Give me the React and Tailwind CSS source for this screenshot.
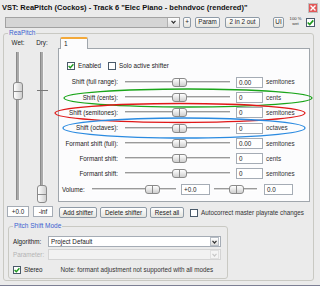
import React from 'react'

const rows = [
  { label: 'Shift (full range):', value: '0.00', unit: 'semitones' },
  { label: 'Shift (cents):', value: '0', unit: 'cents' },
  { label: 'Shift (semitones):', value: '0', unit: 'semitones' },
  { label: 'Shift (octaves):', value: '0', unit: 'octaves' },
  { label: 'Formant shift (full):', value: '0.00', unit: 'semitones' },
  { label: 'Formant shift:', value: '0', unit: 'cents' },
  { label: 'Formant shift:', value: '0', unit: 'semitones' },
]

function Check({ on }) {
  return (
    <div className="w-[8px] h-[8px] border border-[#4a5a6a] bg-white flex items-center justify-center shrink-0">
      {on && (
        <svg width="6" height="6" viewBox="0 0 6 6">
          <path d="M0.6 3 L2.3 4.7 L5.4 1.2" stroke="#1e9a1e" strokeWidth="1.4" fill="none" />
        </svg>
      )}
    </div>
  )
}

function Btn({ children, className = '' }) {
  return (
    <div className={`h-[11px] flex items-center justify-center rounded-[2px] border border-[#8e9aa6] bg-gradient-to-b from-white to-[#e4e4de] text-[6.3px] text-[#222] whitespace-nowrap ${className}`}>
      {children}
    </div>
  )
}

function HSlider({ w, pos }) {
  return (
    <div className="relative h-[9px] shrink-0" style={{ width: w }}>
      <div className="absolute left-0 right-0 top-[3px] h-[3px] bg-[#d6d6d6] border-t border-[#9a9a9a] border-b border-b-white" />
      <div
        className="absolute top-0 h-[9px] w-[15px] rounded-[3px] border border-[#8a8a8a] bg-gradient-to-b from-white to-[#cfcfcf] flex justify-center"
        style={{ left: pos - 7 }}
      >
        <div className="w-px h-full bg-[#8a8a8a]" />
      </div>
    </div>
  )
}

function VSlider({ label, thumb, tick }) {
  return (
    <div className="w-[12px] flex flex-col items-center">
      <div className="h-[8px] text-[6.3px] leading-[8px] whitespace-nowrap">{label}</div>
      <div className="relative w-[12px] h-[157px]">
        <div className="absolute left-[4px] top-[5px] w-[4px] h-[148px] bg-[#a9a9a9] border-l border-[#8a8a8a] border-r border-r-[#f4f4f4]" />
        {tick && <div className="absolute left-[1px] w-[11px] h-px bg-[#777]" style={{ top: tick }} />}
        <div
          className="absolute left-[1px] w-[10px] h-[18px] rounded-[3px] border border-[#8a8a8a] bg-gradient-to-r from-white to-[#cfcfcf] flex items-center"
          style={{ top: thumb }}
        >
          <div className="w-full h-px bg-[#8a8a8a]" />
        </div>
      </div>
    </div>
  )
}

function Edit({ children, className = '' }) {
  return (
    <div className={`h-[11px] bg-white border border-[#a5acb5] text-[6.3px] leading-[9px] px-[2px] shrink-0 ${className}`}>
      {children}
    </div>
  )
}

export default function App() {
  return (
    <div className="relative w-[320px] h-[286px] overflow-hidden bg-[#ebebeb] text-[#222] font-['Liberation_Sans',Arial,sans-serif] border-b border-[#7c7f94]">
      {/* title */}
      <div className="h-[15px] flex items-center pl-[2px] pr-[2px]">
        <span className="text-[7.5px] font-bold text-[#111] whitespace-nowrap">
          VST: ReaPitch (Cockos) - Track 6 "Elec Piano - behndvoc (rendered)"
        </span>
        <div className="ml-auto w-[10px] h-[10px] bg-[#e25858] border border-[#c0c0c0] flex items-center justify-center">
          <svg width="6" height="6" viewBox="0 0 6 6">
            <path d="M0.5 0.5 L5.5 5.5 M5.5 0.5 L0.5 5.5" stroke="white" strokeWidth="1.4" />
          </svg>
        </div>
      </div>

      {/* toolbar */}
      <div className="h-[14px] flex items-center pl-[5px]">
        <div className="w-[175px] h-[11px] bg-[#d5d5d5] border border-[#a2a2a2] flex justify-end">
          <div className="w-[12px] h-full bg-gradient-to-b from-white to-[#dcdcdc] border-l border-[#b0b0b0] flex items-center justify-center">
            <svg width="5" height="4" viewBox="0 0 5 4"><path d="M0.5 0.8 L2.5 3 L4.5 0.8" stroke="#333" strokeWidth="1.2" fill="none" /></svg>
          </div>
        </div>
        <Btn className="ml-[3px] w-[8px]">+</Btn>
        <Btn className="ml-[4px] w-[25px]">Param</Btn>
        <Btn className="ml-[5px] w-[35px]">2 in 2 out</Btn>
        <Btn className="ml-[13px] w-[11px]">UI</Btn>
        <div className="ml-[5px] w-[13px] flex flex-col items-center text-[4.2px] leading-[4.6px] text-[#333]">
          <span>100 %</span>
          <span>wet</span>
        </div>
        <div className="ml-[4px] w-[9px] h-[9px] border border-[#4a5a6a] bg-white flex items-center justify-center">
          <svg width="7" height="7" viewBox="0 0 6 6"><path d="M0.6 3 L2.3 4.7 L5.4 1.2" stroke="#1e9a1e" strokeWidth="1.4" fill="none" /></svg>
        </div>
      </div>

      {/* ReaPitch group */}
      <div className="relative mt-[4px] ml-[3px] w-[311px] h-[248px] border border-[#c9c9c3] rounded-[3px]">
        <span className="absolute -top-[5px] left-[4px] px-[1px] bg-[#ebebeb] text-[6.5px] leading-[8px] text-[#3a5fd0]">ReaPitch</span>

        <div className="flex pl-[3px]">
          {/* wet / dry */}
          <div className="w-[50px] pt-[5px] flex flex-col">
            <div className="flex pl-[5px] gap-[12px]">
              <VSlider label="Wet:" thumb={35} />
              <VSlider label="Dry:" thumb={138} tick={43} />
            </div>
            <div className="flex mt-[2px] gap-[4px]">
              <Edit className="w-[22px] text-center">+0.0</Edit>
              <Edit className="w-[20px] text-center">-inf</Edit>
            </div>
          </div>

          {/* tab panel */}
          <div className="ml-[1px] w-[252px] pt-[3px]">
            <div className="ml-[2px] w-[28px] h-[12px] -mb-px relative z-10 bg-[#fcfcfd] border border-[#a0a6ac] border-b-0 border-t-2 border-t-[#f3a93a] rounded-t-[2px] text-[6.5px] leading-[9px] pl-[3px]">
              1
            </div>
            <div className="h-[154px] bg-[#fcfcfd] border border-[#a0a6ac] pt-[12px]">
              <div className="flex items-center h-[9px] pl-[8px] text-[6.3px]">
                <Check on />
                <span className="ml-[3px]">Enabled</span>
                <div className="ml-[7px]"><Check /></div>
                <span className="ml-[3px]">Solo active shifter</span>
              </div>
              <div className="mt-[4.5px]">
                {rows.map((r, i) => (
                  <div key={i} className="h-[15.3px] flex items-center text-[6.3px]">
                    <span className="w-[59px] text-right whitespace-nowrap">{r.label}</span>
                    <div className="ml-[7px]"><HSlider w={105} pos={54} /></div>
                    <Edit className="ml-[6px] w-[27px]">{r.value}</Edit>
                    <span className="ml-[3px] text-[#333]">{r.unit}</span>
                  </div>
                ))}
                <div className="h-[15.3px] flex items-center text-[6.3px]">
                  <span className="ml-[3px] w-[30px]">Volume:</span>
                  <HSlider w={84} pos={60} />
                  <Edit className="ml-[5px] w-[29px]">+0.0</Edit>
                  <div className="ml-[4px]"><HSlider w={43} pos={22} /></div>
                  <Edit className="ml-[7px] w-[29px]">0.0</Edit>
                </div>
              </div>
            </div>
            <div className="flex items-center mt-[5px] pl-[1px]">
              <Btn className="w-[38px]">Add shifter</Btn>
              <Btn className="ml-[3px] w-[47px]">Delete shifter</Btn>
              <Btn className="ml-[3px] w-[34px]">Reset all</Btn>
              <div className="ml-[6px]"><Check /></div>
              <span className="ml-[3px] text-[6.3px] text-[#333] whitespace-nowrap">Autocorrect master playrate changes</span>
            </div>
          </div>
        </div>

        {/* Pitch shift mode */}
        <div className="relative mt-[8px] ml-[4px] w-[220px] h-[53px] border border-[#c9c9c3] rounded-[3px] text-[6.3px]">
          <span className="absolute -top-[5px] left-[4px] px-[1px] bg-[#ebebeb] text-[6.5px] leading-[8px] text-[#3a5fd0]">Pitch Shift Mode</span>
          <div className="flex items-center mt-[9px] pl-[4px]">
            <span className="w-[35px]">Algorithm:</span>
            <div className="w-[173px] h-[11px] bg-white border border-[#a5acb5] flex items-center">
              <span className="pl-[2px] flex-1">Project Default</span>
              <div className="w-[9px] h-[9px] mr-px bg-gradient-to-b from-white to-[#dcdcdc] border border-[#b8bec6] flex items-center justify-center">
                <svg width="5" height="4" viewBox="0 0 5 4"><path d="M0.5 0.8 L2.5 3 L4.5 0.8" stroke="#333" strokeWidth="1.2" fill="none" /></svg>
              </div>
            </div>
          </div>
          <div className="flex items-center mt-[2px] pl-[4px]">
            <span className="w-[35px] text-[#b4b4b4]">Parameter:</span>
            <div className="w-[173px] h-[11px] bg-[#f2f2f2] border border-[#d4d4d4] flex items-center justify-end">
              <div className="w-[9px] h-[9px] mr-px bg-[#f4f4f4] border border-[#e0e0e0] flex items-center justify-center">
                <svg width="5" height="4" viewBox="0 0 5 4"><path d="M0.5 0.8 L2.5 3 L4.5 0.8" stroke="#c8c8c8" strokeWidth="1.2" fill="none" /></svg>
              </div>
            </div>
          </div>
          <div className="flex items-center mt-[5px] pl-[4px]">
            <Check on />
            <span className="ml-[3px]">Stereo</span>
            <span className="ml-[18px] text-[#333]">Note: formant adjustment not supported with all modes</span>
          </div>
        </div>
      </div>

      {/* hand-drawn annotations */}
      <svg className="absolute inset-0 pointer-events-none" width="320" height="286">
        <ellipse cx="188" cy="98" rx="124" ry="9" fill="none" stroke="#1aa51a" strokeWidth="1.3" />
        <ellipse cx="180" cy="113" rx="125" ry="9.5" fill="none" stroke="#e01818" strokeWidth="1.3" />
        <ellipse cx="184" cy="128" rx="121" ry="10" fill="none" stroke="#2a8ae0" strokeWidth="1.3" />
      </svg>
    </div>
  )
}
